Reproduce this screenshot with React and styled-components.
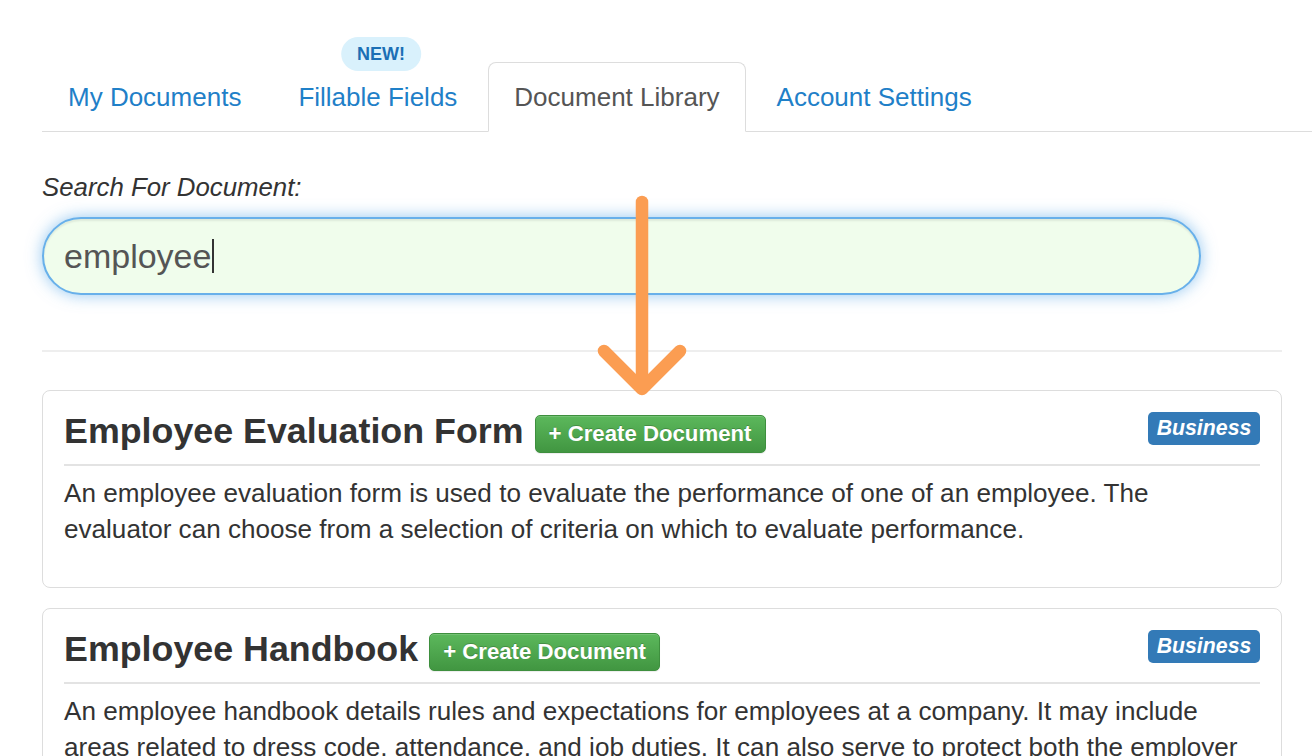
import React from "react";
import styled, { createGlobalStyle } from "styled-components";

const Global = createGlobalStyle`
  * { box-sizing: border-box; }
  html, body { margin: 0; padding: 0; background: #fff; }
  body { font-family: "Liberation Sans", Arial, Helvetica, sans-serif; color: #333; overflow: hidden; }
`;

const Page = styled.div`
  position: relative;
  width: 1312px;
  height: 756px;
  overflow: hidden;
  padding: 62px 30px 0 42px;
`;

const Tabs = styled.ul`
  display: flex;
  list-style: none;
  margin: 0 -30px 0 0;
  padding: 0;
  border-bottom: 1px solid #ddd;
`;

const Tab = styled.li`
  position: relative;
  margin-right: 5px;
  margin-bottom: -1px;
`;

const TabLink = styled.a`
  display: block;
  height: 70px;
  line-height: 69px;
  padding: 0 25px 0 25px;
  font-size: 26px;
  text-decoration: none;
  white-space: nowrap;
  color: ${(p) => (p.$active ? "#555" : "#1f80c8")};
  background: ${(p) => (p.$active ? "#fff" : "transparent")};
  border: 1px solid ${(p) => (p.$active ? "#ddd" : "transparent")};
  border-bottom-color: ${(p) => (p.$active ? "#fff" : "transparent")};
  border-radius: 8px 8px 0 0;
`;

const NewBadge = styled.span`
  position: absolute;
  top: -25px;
  left: 50%;
  transform: translateX(-46%);
  width: 80px;
  height: 34px;
  line-height: 34px;
  border-radius: 17px;
  background: #d9f1fc;
  color: #1b6fb5;
  font-size: 18px;
  font-weight: bold;
  text-align: center;
`;

const SearchLabel = styled.label`
  display: block;
  margin-top: 41px;
  font-size: 25.8px;
  font-style: italic;
  color: #333;
  line-height: 28px;
`;

const SearchBox = styled.div`
  margin-top: 16px;
  width: 1159px;
  height: 78px;
  border-radius: 39px;
  border: 2px solid #68b0ea;
  background: #f0fdec;
  box-shadow: inset 0 2px 2px rgba(0, 0, 0, 0.075), 0 0 16px rgba(102, 175, 233, 0.7);
  display: flex;
  align-items: center;
  padding-left: 20px;
  font-size: 34px;
  color: #555;
`;

const Caret = styled.span`
  display: inline-block;
  width: 1.5px;
  height: 34px;
  background: #333;
  margin-left: 1px;
  vertical-align: middle;
`;

const Rule = styled.hr`
  border: 0;
  border-top: 2px solid #eee;
  margin: 55px 0 38px;
`;

const Card = styled.div`
  border: 1.5px solid #ddd;
  border-radius: 8px;
  padding: 20px 21px 40px;
  margin-bottom: 20px;
`;

const CardHead = styled.div`
  display: flex;
  align-items: center;
  height: 40px;
`;

const Title = styled.h3`
  margin: 0;
  font-size: 35.8px;
  font-weight: bold;
  color: #333;
  line-height: 40px;
`;

const CreateButton = styled.button`
  margin-left: 11px;
  margin-top: 5px;
  height: 38px;
  width: 231px;
  padding: 0;
  font-family: inherit;
  font-size: 22.2px;
  font-weight: bold;
  color: #fff;
  background: linear-gradient(to bottom, #5cb85c 0%, #419641 100%);
  border: 1px solid #3e8f3e;
  border-radius: 5px;
  text-shadow: 0 -1px 0 rgba(0, 0, 0, 0.2);
  box-shadow: inset 0 1px 0 rgba(255, 255, 255, 0.15), 0 1px 1px rgba(0, 0, 0, 0.075);
`;

const Category = styled.span`
  margin-left: auto;
  margin-top: -6px;
  width: 112px;
  height: 33px;
  line-height: 33px;
  text-align: center;
  background: #337ab7;
  color: #fff;
  border-radius: 5px;
  font-size: 21.3px;
  font-weight: bold;
  font-style: italic;
`;

const CardRule = styled.hr`
  border: 0;
  border-top: 2px solid #e3e3e3;
  margin: 13px 0 9px;
`;

const Desc = styled.p`
  margin: 0;
  padding-right: 16px;
  font-size: 26.1px;
  line-height: 36px;
  color: #333;
`;

const Arrow = styled.svg`
  position: absolute;
  left: 590px;
  top: 190px;
`;

const docs = [
  {
    title: "Employee Evaluation Form",
    category: "Business",
    text:
      "An employee evaluation form is used to evaluate the performance of one of an employee. The evaluator can choose from a selection of criteria on which to evaluate performance.",
  },
  {
    title: "Employee Handbook",
    category: "Business",
    text:
      "An employee handbook details rules and expectations for employees at a company. It may include areas related to dress code, attendance, and job duties. It can also serve to protect both the employer and the employee in the event of a dispute.",
  },
];

export default function App() {
  return (
    <Page>
      <Global />
      <Tabs>
        <Tab>
          <TabLink href="#">My Documents</TabLink>
        </Tab>
        <Tab>
          <NewBadge>NEW!</NewBadge>
          <TabLink href="#">Fillable Fields</TabLink>
        </Tab>
        <Tab>
          <TabLink href="#" $active>
            Document Library
          </TabLink>
        </Tab>
        <Tab>
          <TabLink href="#">Account Settings</TabLink>
        </Tab>
      </Tabs>
      <SearchLabel>Search For Document:</SearchLabel>
      <SearchBox>
        employee
        <Caret />
      </SearchBox>
      <Rule />
      {docs.map((d) => (
        <Card key={d.title}>
          <CardHead>
            <Title>{d.title}</Title>
            <CreateButton>+ Create Document</CreateButton>
            <Category>{d.category}</Category>
          </CardHead>
          <CardRule />
          <Desc>{d.text}</Desc>
        </Card>
      ))}
      <Arrow width="110" height="215" viewBox="0 0 110 215">
        <g stroke="#fb9d52" strokeWidth="12.5" strokeLinecap="round" strokeLinejoin="round" fill="none">
          <line x1="52" y1="12" x2="52" y2="198" />
          <polyline points="14,161 52,199 90,161" />
        </g>
      </Arrow>
    </Page>
  );
}
